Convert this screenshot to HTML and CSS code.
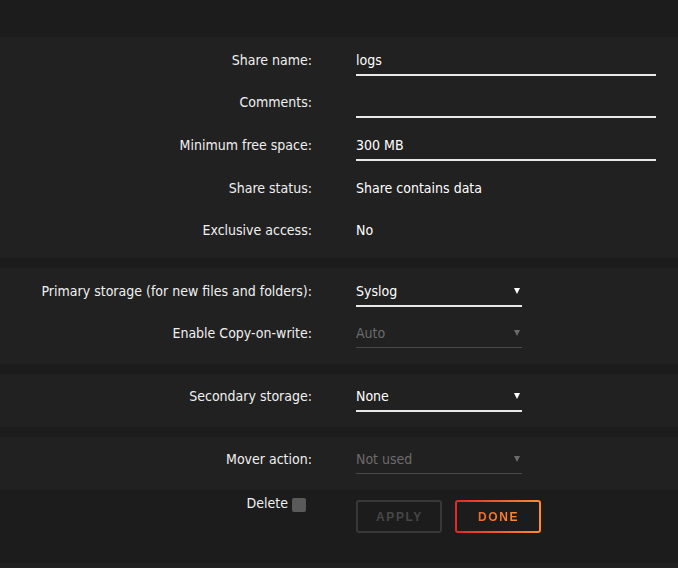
FILE: index.html
```html
<!DOCTYPE html>
<html>
<head>
<meta charset="utf-8">
<link rel="stylesheet" href="styles.css">
</head>
<body>
<div class="top"></div>

<section class="panel first">
  <div class="row">
    <div class="label">Share name:</div>
    <div class="value"><div class="input wide">logs</div></div>
  </div>
  <div class="row tall">
    <div class="label">Comments:</div>
    <div class="value"><div class="input wide"></div></div>
  </div>
  <div class="row tall">
    <div class="label">Minimum free space:</div>
    <div class="value"><div class="input wide">300 MB</div></div>
  </div>
  <div class="row">
    <div class="label">Share status:</div>
    <div class="value"><div class="text">Share contains data</div></div>
  </div>
  <div class="row">
    <div class="label">Exclusive access:</div>
    <div class="value"><div class="text">No</div></div>
  </div>
</section>

<section class="panel">
  <div class="row">
    <div class="label">Primary storage (for new files and folders):</div>
    <div class="value"><div class="input select">Syslog<span class="arrow"></span></div></div>
  </div>
  <div class="row">
    <div class="label">Enable Copy-on-write:</div>
    <div class="value"><div class="input select disabled">Auto<span class="arrow"></span></div></div>
  </div>
</section>

<section class="panel single">
  <div class="row">
    <div class="label">Secondary storage:</div>
    <div class="value"><div class="input select">None<span class="arrow"></span></div></div>
  </div>
</section>

<section class="panel single last">
  <div class="row">
    <div class="label">Mover action:</div>
    <div class="value"><div class="input select disabled">Not used<span class="arrow"></span></div></div>
  </div>
</section>

<div class="actions">
  <div class="delete">Delete <span class="checkbox"></span></div>
  <div class="buttons">
    <button class="btn apply">APPLY</button>
    <button class="btn done"><span>DONE</span></button>
  </div>
</div>
<div class="footer"></div>
</body>
</html>
```
FILE: styles.css
```css
html, body {
  margin: 0;
  padding: 0;
  background: #1c1c1c;
  height: 100%;
  overflow: hidden;
}
body {
  font-family: "Liberation Sans Narrow", "DejaVu Sans Condensed", "Liberation Sans", sans-serif;
  font-size: 14px;
  color: #f0f0f0;
}
.top {
  height: 37px;
}
.panel {
  background: #212121;
  padding: 2px 0 10px;
  margin-bottom: 10px;
}
.panel.first {
  padding-bottom: 7px;
}
.panel.single {
  padding-top: 1px;
}
.panel.last {
  margin-bottom: 0;
}
.row {
  display: grid;
  grid-template-columns: 312px 300px;
  column-gap: 44px;
  height: 42px;
}
.row.tall {
  height: 43px;
}
.label {
  text-align: right;
  line-height: 18px;
  padding-top: 12px;
  white-space: nowrap;
}
.value {
  min-width: 0;
}
.input {
  box-sizing: border-box;
  height: 37px;
  line-height: 18px;
  padding-top: 12px;
  border-bottom: 2px solid #e8e8e8;
  color: #ffffff;
}
.text {
  line-height: 18px;
  padding-top: 12px;
  color: #ffffff;
}
.wide {
  width: 300px;
}
.select {
  width: 166px;
  position: relative;
}
.arrow {
  position: absolute;
  right: 2px;
  top: 18px;
  width: 0;
  height: 0;
  border-left: 3px solid transparent;
  border-right: 3px solid transparent;
  border-top: 6px solid #ffffff;
}
.select.disabled {
  color: #6c6c6c;
  border-bottom: 1px solid #4a4a4a;
  height: 36px;
}
.select.disabled .arrow {
  border-top-color: #6c6c6c;
}
.actions {
  display: grid;
  grid-template-columns: 312px 300px;
  column-gap: 44px;
  height: 73px;
}
.delete {
  padding-top: 4px;
  padding-right: 6px;
  line-height: 18px;
  display: flex;
  justify-content: flex-end;
  align-items: flex-start;
  gap: 4px;
}
.checkbox {
  display: inline-block;
  width: 14px;
  height: 14px;
  margin-top: 4px;
  background: #5a5a5a;
  border-radius: 2px;
}
.buttons {
  display: flex;
  gap: 13px;
  padding-top: 10px;
}
.btn {
  box-sizing: border-box;
  width: 86px;
  height: 33px;
  background: transparent;
  font-family: "Liberation Sans", sans-serif;
  font-weight: bold;
  font-size: 12px;
  letter-spacing: 1.6px;
  border-radius: 3px;
  padding: 0 0 0 1px;
  margin: 0;
}
.apply {
  border: 2px solid #383838;
  color: #474747;
}
.done {
  border: 2px solid transparent;
  background: linear-gradient(#1c1c1c, #1c1c1c) padding-box,
              linear-gradient(90deg, #e22828, #ff8c2f) border-box;
}
.done span {
  background: linear-gradient(90deg, #f06a2a, #ff8c2f);
  -webkit-background-clip: text;
  background-clip: text;
  color: transparent;
}
.footer {
  background: #212121;
  height: 10px;
}
```
